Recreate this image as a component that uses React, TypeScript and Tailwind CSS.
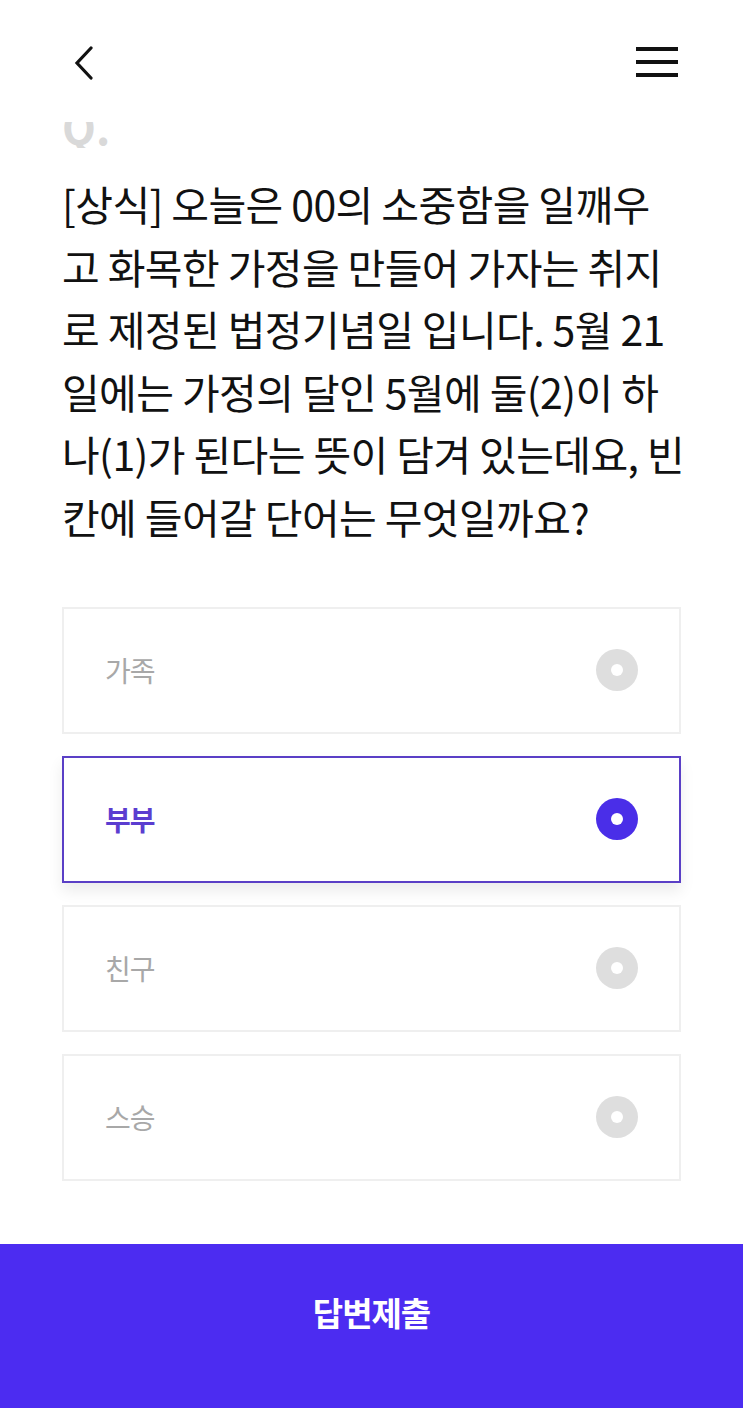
import React from "react";

const lines = [
  "[상식] 오늘은 00의 소중함을 일깨우",
  "고 화목한 가정을 만들어 가자는 취지",
  "로 제정된 법정기념일 입니다. 5월 21",
  "일에는 가정의 달인 5월에 둘(2)이 하",
  "나(1)가 된다는 뜻이 담겨 있는데요, 빈",
  "칸에 들어갈 단어는 무엇일까요?",
];

const options = [
  { label: "가족", selected: false },
  { label: "부부", selected: true },
  { label: "친구", selected: false },
  { label: "스승", selected: false },
];

export default function App() {
  return (
    <div
      className="w-full min-h-[1408px] bg-white flex flex-col"
      style={{ fontFamily: '"Noto Sans CJK KR", "Noto Sans", sans-serif' }}
    >
      <div className="h-[122px] flex justify-between items-start px-[62px] pt-[46px]">
        <svg width="24" height="34" viewBox="0 0 24 34" className="ml-[10px]">
          <path d="M19 2 L5 17 L19 32" fill="none" stroke="#111" strokeWidth="3.2" strokeLinecap="round" strokeLinejoin="miter" />
        </svg>
        <div className="flex flex-col gap-[9px] mt-[1px] mr-[3px] w-[42px]">
          <div className="h-[4px] bg-[#111]" />
          <div className="h-[4px] bg-[#111]" />
          <div className="h-[4px] bg-[#111]" />
        </div>
      </div>
      <div className="px-[62px] h-[26px] overflow-hidden flex items-end">
        <span className="text-[44px] leading-[44px] font-bold text-[#d9d9d9]">Q.</span>
      </div>
      <div className="px-[62px] mt-[24px] text-[#111] text-[41px] leading-[62.6px] tracking-[-0.6px]">
        {lines.map((l, i) => (
          <div key={i} className="whitespace-nowrap">{l}</div>
        ))}
      </div>
      <div className="px-[62px] mt-[59px] flex flex-col gap-[22px]">
        {options.map((o) => (
          <div
            key={o.label}
            className={
              o.selected
                ? "h-[127px] border-2 border-[#5a3fc6] bg-white flex items-center justify-between pl-[41px] pr-[41px] shadow-[0_8px_14px_rgba(0,0,0,0.08)]"
                : "h-[127px] border-2 border-[#efefef] bg-white flex items-center justify-between pl-[41px] pr-[41px]"
            }
          >
            <span
              className={
                o.selected
                  ? "text-[28px] font-bold text-[#5b3dd0] tracking-[-1px]"
                  : "text-[28px] text-[#a8a8a8] tracking-[-1px]"
              }
            >
              {o.label}
            </span>
            <div
              className={
                o.selected
                  ? "w-[42px] h-[42px] rounded-full bg-[#4a2ee8] flex items-center justify-center"
                  : "w-[42px] h-[42px] rounded-full bg-[#dedede] flex items-center justify-center"
              }
            >
              <div className="w-[12px] h-[12px] rounded-full bg-white" />
            </div>
          </div>
        ))}
      </div>
      <div className="mt-[63px] h-[165px] bg-[#4c2cf1] flex items-center justify-center pb-[26px]">
        <span className="text-white text-[33px] font-bold tracking-[-1px]">답변제출</span>
      </div>
    </div>
  );
}
